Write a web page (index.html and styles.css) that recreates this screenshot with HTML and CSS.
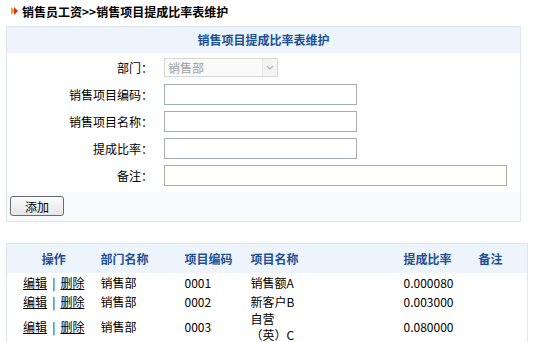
FILE: index.html
```html
<!DOCTYPE html>
<html lang="zh-CN">
  <head>
    <meta charset="UTF-8" />
    <title>销售项目提成比率表维护</title>
    <link rel="stylesheet" href="styles.css">
  </head>
  <body>
    <div class="crumb">
      <svg class="crumb-icon" width="7" height="8" viewBox="0 0 7 8">
        <polygon points="0,0 4,4 0,8" fill="#f0a020" />
        <polygon points="3,0 7,4 3,8" fill="#d83010" />
      </svg>
      <span>销售员工资&gt;&gt;销售项目提成比率表维护</span>
    </div>

    <div class="form-box">
      <div class="form-title">销售项目提成比率表维护</div>
      <div class="form-rows">
        <div class="form-row">
          <label>部门：</label>
          <div class="fake-select">
            <span>销售部</span>
            <span class="select-arrow">
              <svg width="8" height="5" viewBox="0 0 8 5"><path d="M1 1 L4 4 L7 1" stroke="#b0b0b0" stroke-width="1.2" fill="none" /></svg>
            </span>
          </div>
        </div>
        <div class="form-row">
          <label>销售项目编码：</label>
          <input class="field" type="text" />
        </div>
        <div class="form-row">
          <label>销售项目名称：</label>
          <input class="field" type="text" />
        </div>
        <div class="form-row">
          <label>提成比率：</label>
          <input class="field" type="text" />
        </div>
        <div class="form-row">
          <label>备注：</label>
          <input class="field field-wide" type="text" />
        </div>
      </div>
      <div class="form-actions">
        <button class="btn">添加</button>
      </div>
    </div>

    <table class="list">
      <thead>
        <tr>
          <th class="col-op">操作</th>
          <th class="col-dept">部门名称</th>
          <th class="col-code">项目编码</th>
          <th class="col-name">项目名称</th>
          <th class="col-rate">提成比率</th>
          <th class="col-note">备注</th>
        </tr>
      </thead>
      <tbody>
        <tr>
          <td class="col-op"><a href="#">编辑</a><span class="sep">|</span><a href="#">删除</a></td>
          <td>销售部</td>
          <td>0001</td>
          <td>销售额A</td>
          <td>0.000080</td>
          <td></td>
        </tr>
        <tr>
          <td class="col-op"><a href="#">编辑</a><span class="sep">|</span><a href="#">删除</a></td>
          <td>销售部</td>
          <td>0002</td>
          <td>新客户B</td>
          <td>0.003000</td>
          <td></td>
        </tr>
        <tr class="tall">
          <td class="col-op"><a href="#">编辑</a><span class="sep">|</span><a href="#">删除</a></td>
          <td>销售部</td>
          <td>0003</td>
          <td>自营<br />（英）C</td>
          <td>0.080000</td>
          <td></td>
        </tr>
      </tbody>
    </table>
  </body>
</html>
```

FILE: styles.css
```css
* {
  margin: 0;
  padding: 0;
  box-sizing: border-box;
}

body {
  font-family: "Noto Sans CJK SC", "Liberation Sans", sans-serif;
  font-size: 12px;
  color: #000;
  background: #fff;
}

.crumb {
  display: flex;
  align-items: center;
  gap: 4px;
  height: 22px;
  padding-left: 11px;
  font-weight: bold;
}

.crumb-icon {
  flex: none;
}

.form-box {
  margin: 4px 0 0 6px;
  width: 515px;
  border: 1px solid #dbe6f1;
}

.form-title {
  height: 26px;
  line-height: 26px;
  text-align: center;
  background-color: #edf4fc;
  color: #1d4f94;
  font-weight: bold;
}

.form-rows {
  padding-top: 1px;
}

.form-row {
  display: grid;
  grid-template-columns: 146px 1fr;
  column-gap: 11px;
  align-items: center;
  height: 27px;
}

.form-row label {
  text-align: right;
}

.fake-select {
  display: flex;
  align-items: center;
  justify-content: space-between;
  width: 114px;
  height: 19px;
  padding-left: 3px;
  border: 1px solid #d8d8d8;
  background: #fafafa;
  color: #a0a0a0;
}

.select-arrow {
  display: flex;
  align-items: center;
  justify-content: center;
  width: 15px;
  height: 17px;
  border-left: 1px solid #e4e4e4;
  background: #f4f4f4;
}

.field {
  width: 193px;
  height: 21px;
  border: 1px solid #a5acb5;
  background: #fff;
  font: inherit;
}

.field-wide {
  width: 343px;
  background: #fffef8;
}

.form-actions {
  margin-top: 3px;
  height: 29px;
  padding: 4px 0 0 3px;
  background-color: #f8f9fb;
}

.btn {
  width: 54px;
  height: 20px;
  border: 1px solid #6b6b6b;
  border-radius: 3px;
  background: linear-gradient(#fbfbfb, #e6e6e6);
  font: inherit;
  color: #000;
}

.list {
  margin: 21px 0 0 6px;
  width: 522px;
  border-collapse: collapse;
  border: 1px solid #dbe6f1;
  table-layout: fixed;
}

.list th {
  height: 29px;
  background-color: #edf4fc;
  color: #1d4f94;
  font-weight: bold;
  text-align: left;
  padding-left: 4px;
}

.list td {
  height: 19px;
  padding-left: 4px;
  line-height: 15px;
}

.list tr.tall td {
  height: 34px;
  line-height: 16px;
}

.list .col-op {
  width: 90px;
  text-align: center;
  padding-left: 4px;
}

.list .col-dept {
  width: 84px;
}

.list .col-code {
  width: 66px;
}

.list .col-name {
  width: 153px;
}

.list .col-rate {
  width: 75px;
}

.list a {
  color: #000;
  text-decoration: underline;
}

.sep {
  margin: 0 5px;
}
```
